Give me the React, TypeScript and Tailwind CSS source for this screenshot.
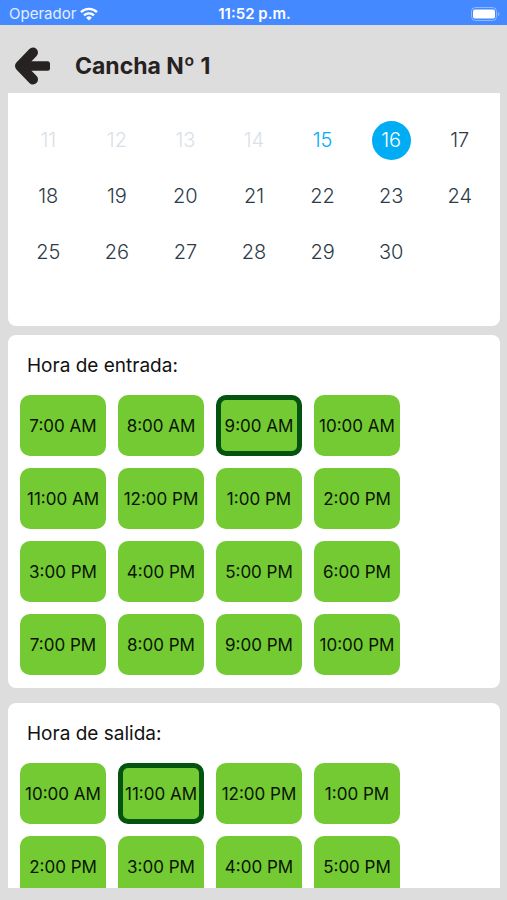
import { useState } from 'react';

const DAYS = [11, 12, 13, 14, 15, 16, 17, 18, 19, 20, 21, 22, 23, 24, 25, 26, 27, 28, 29, 30];
const TODAY = 15;

const ENTRY_HOURS = [
    '7:00 AM',
    '8:00 AM',
    '9:00 AM',
    '10:00 AM',
    '11:00 AM',
    '12:00 PM',
    '1:00 PM',
    '2:00 PM',
    '3:00 PM',
    '4:00 PM',
    '5:00 PM',
    '6:00 PM',
    '7:00 PM',
    '8:00 PM',
    '9:00 PM',
    '10:00 PM',
];

const EXIT_HOURS = ['10:00 AM', '11:00 AM', '12:00 PM', '1:00 PM', '2:00 PM', '3:00 PM', '4:00 PM', '5:00 PM'];

const WifiIcon = () => (
    <svg className="h-[14px] w-[18px]" viewBox="0 0 18 14" fill="none" stroke="white" strokeWidth="2.4">
        <path d="M1 5.2a11.4 11.4 0 0 1 16 0" />
        <path d="M4 8.4a7.2 7.2 0 0 1 10 0" />
        <path d="M9 13.6 6.2 10.7a4 4 0 0 1 5.6 0Z" fill="white" stroke="none" />
    </svg>
);

const BatteryIcon = () => (
    <svg className="h-[14px] w-[29px]" viewBox="0 0 29 14">
        <rect x="0.5" y="0.5" width="25" height="13" rx="4" fill="none" stroke="white" strokeOpacity="0.4" />
        <rect x="2" y="2.5" width="22" height="9" rx="2" fill="white" />
        <path d="M27 5v4c1.8-.5 1.8-3.5 0-4Z" fill="white" fillOpacity="0.4" />
    </svg>
);

const BackIcon = () => (
    <svg className="h-[38px] w-[36px]" viewBox="0 0 36 38" fill="none" stroke="#272222">
        <path d="M18 5.5 5 19l13 13.500" strokeWidth="10" strokeLinecap="round" strokeLinejoin="round" />
        <path d="M6 14.200H32.500Q35 14.200 35 16.700V21.300Q35 23.800 32.500 23.800H6Z" fill="#272222" stroke="none" />
    </svg>
);

const StatusBar = () => (
    <div className="grid h-[25px] shrink-0 grid-cols-3 items-center bg-[#4489ff] pt-[3px] pr-[7px] pl-[9px] text-white">
        <div className="flex items-center gap-1 text-[15px] text-white/85">
            <span>Operador</span>
            <WifiIcon />
        </div>
        <span className="text-center text-[15px] font-semibold whitespace-nowrap">11:52 p.m.</span>
        <div className="flex justify-end">
            <BatteryIcon />
        </div>
    </div>
);

const Calendar = () => {
    const [selected, setSelected] = useState(16);

    const dayStyle = (day: number) => {
        if (day === selected) return 'bg-[#00adf5] text-white';
        if (day < TODAY) return 'text-[#d9e1e8]';
        if (day === TODAY) return 'text-[#00adf5]';
        return 'text-[#2d3b47]';
    };

    return (
        <section className="rounded-b-lg bg-white px-1.5 pt-[19px] pb-[46px]">
            <div className="grid grid-cols-7">
                {DAYS.map((day) => (
                    <div key={day} className="flex h-14 items-center justify-center">
                        <button
                            className={`h-[39px] w-[39px] rounded-full text-[20px] font-light ${dayStyle(day)}`}
                            disabled={day < TODAY}
                            onClick={() => setSelected(day)}
                        >
                            {day}
                        </button>
                    </div>
                ))}
            </div>
        </section>
    );
};

interface HourPickerProps {
    title: string;
    hours: string[];
    initial: string;
}

const HourPicker = ({ title, hours, initial }: HourPickerProps) => {
    const [selected, setSelected] = useState(initial);

    return (
        <section className="rounded-lg bg-white px-3 pt-[17px] pb-[13px]">
            <h2 className="pl-[7px] text-[19px] leading-7">{title}</h2>
            <div className="mt-[15px] flex max-w-[404px] flex-wrap gap-3">
                {hours.map((hour) => (
                    <button
                        key={hour}
                        className={`h-[61px] w-[86px] rounded-[10px] bg-[#73ca32] pt-0.5 text-[17px] whitespace-nowrap text-[#0a1404] ${
                            hour === selected ? 'border-[5px] border-[#04530f]' : ''
                        }`}
                        onClick={() => setSelected(hour)}
                    >
                        <span className="-mx-2">{hour}</span>
                    </button>
                ))}
            </div>
        </section>
    );
};

const App = () => (
    <div className="flex h-screen flex-col bg-[#dddddd] font-['Inter','Liberation_Sans',sans-serif] text-[#111111]">
        <StatusBar />
        <header className="flex h-[68px] shrink-0 items-center gap-6 px-[15px] pt-[14px]">
            <button aria-label="Volver">
                <BackIcon />
            </button>
            <h1 className="text-[23px] font-bold text-[#272222]">Cancha Nº 1</h1>
        </header>
        <main className="mr-[7px] mb-3 ml-2 min-h-0 flex-1 overflow-hidden">
            <Calendar />
            <div className="mt-[9px] flex flex-col gap-[15px]">
                <HourPicker title="Hora de entrada:" hours={ENTRY_HOURS} initial="9:00 AM" />
                <HourPicker title="Hora de salida:" hours={EXIT_HOURS} initial="11:00 AM" />
            </div>
        </main>
    </div>
);

export default App;
